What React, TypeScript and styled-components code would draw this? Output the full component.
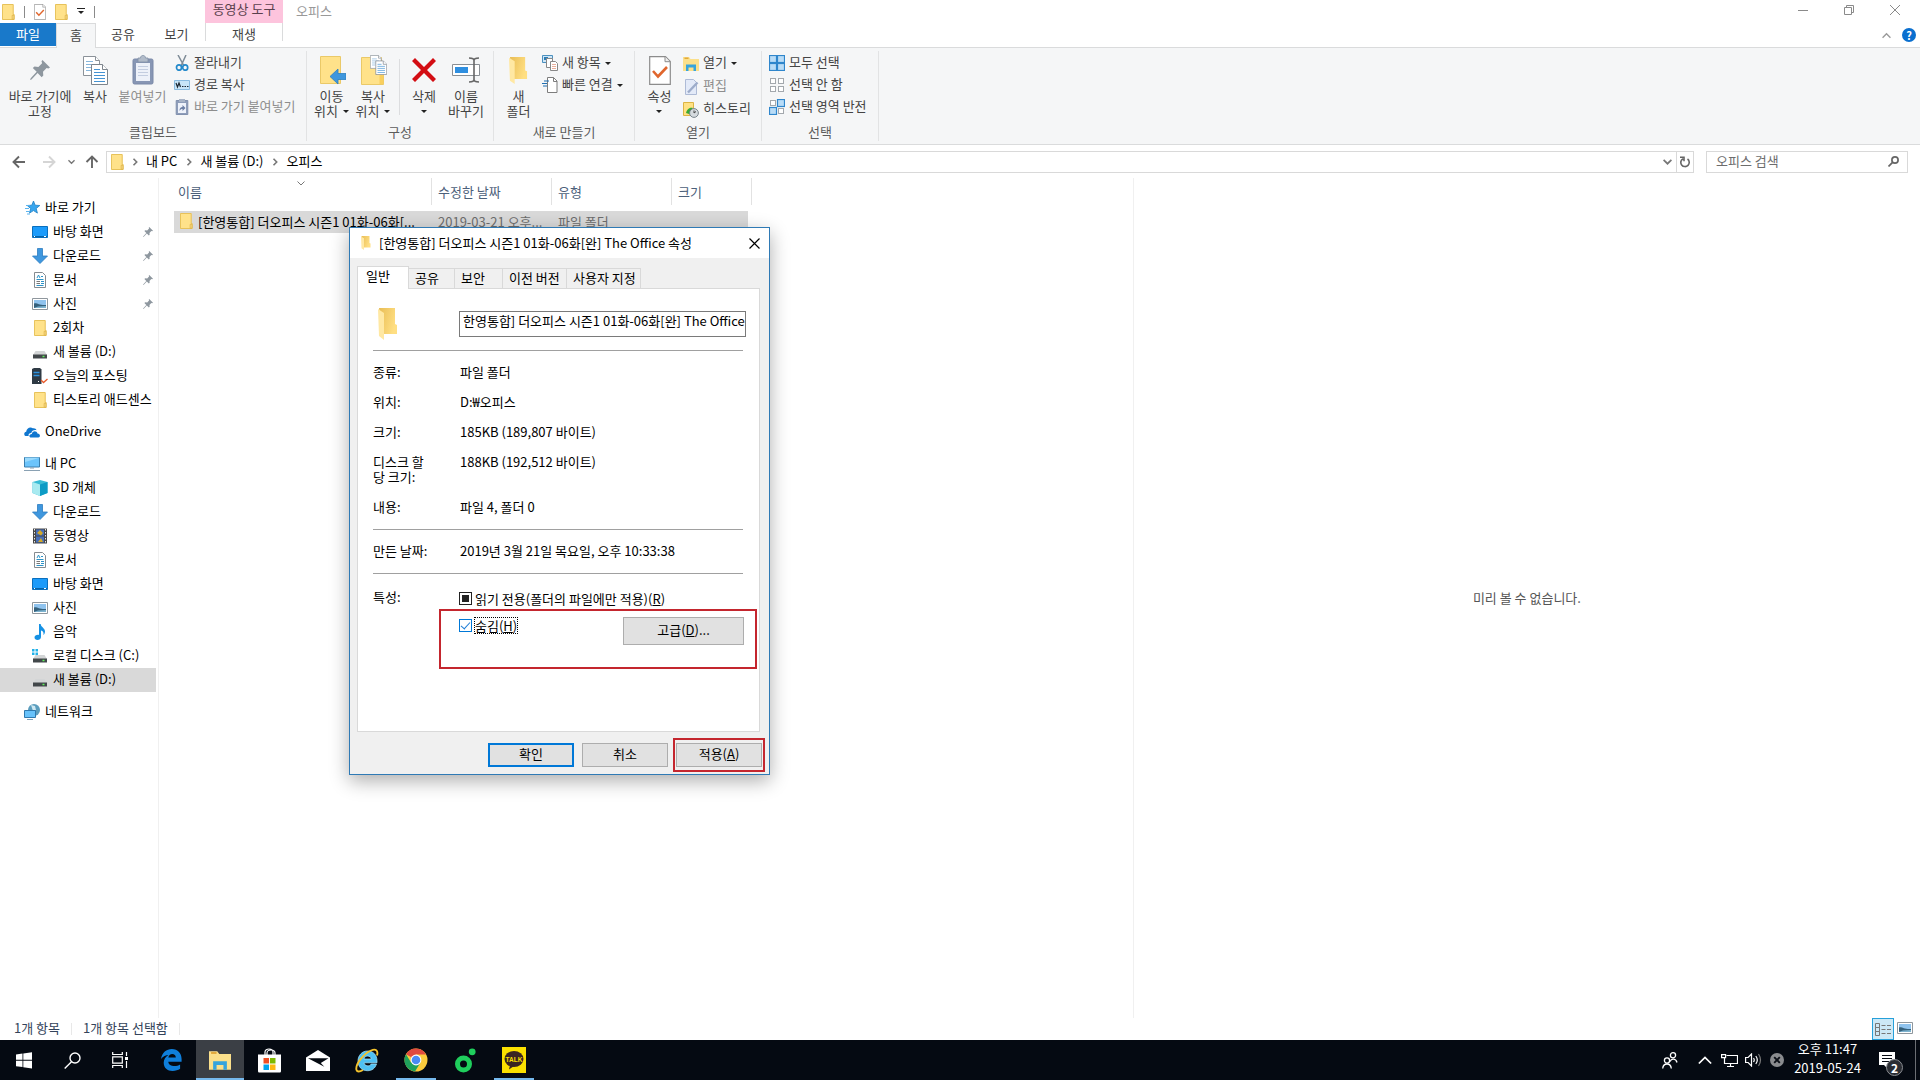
import React, { useEffect, useRef } from "react";
import styled, { createGlobalStyle, css } from "styled-components";

const GlobalStyle = createGlobalStyle`
  *, *::before, *::after { box-sizing: border-box; }
  body { margin: 0; background: #fff; }
  body, button, input { font-family: "Noto Sans CJK KR", "Noto Sans", sans-serif; font-size: 13px; line-height: 15px; }
  button { border: 0; padding: 0; background: none; color: inherit; }
  svg { display: block; flex: none; }
`;

/* ---------- icons ---------- */

const FolderIcon = ({ w = 13, h = 16 }: { w?: number; h?: number }) => (
  <svg width={w} height={h} viewBox="0 0 14 16" preserveAspectRatio="none">
    <path d="M.5.5h11.6v10h1v5H.5z" fill="#ffe28a" stroke="#e6bf55" />
    <path d="M11 15.300v-4h1.800v4z" fill="#ffe9a6" stroke="#dcae3c" strokeWidth=".8" />
  </svg>
);

const OpenFolderIcon = ({ w, h }: { w: number; h: number }) => (
  <svg width={w} height={h} viewBox="0 0 20 32" preserveAspectRatio="none">
    <defs>
      <linearGradient id="fld" x1="0" x2="1" y1="0" y2=".4">
        <stop offset="0" stopColor="#e9bd55" />
        <stop offset="1" stopColor="#ffdf83" />
      </linearGradient>
    </defs>
    <path d="M1 0h16v16l2 1v9H4z" fill="url(#fld)" />
    <path d="M0 1l6 4v27l-5-4z" fill="#ffe8a3" />
  </svg>
);

const CheckDocIcon = ({ w, h }: { w: number; h: number }) => (
  <svg width={w} height={h} viewBox="0 0 22 29">
    <path d="M.7.700h15.800l4.800 4.800v22.800H.7z" fill="#fff" stroke="#8c8c8c" strokeWidth="1.200" />
    <path d="M16 .7v5h5" fill="#eee" stroke="#8c8c8c" />
    <path d="M4 15l5 5.500 9-9.500" fill="none" stroke="#e0662d" strokeWidth="2.600" />
  </svg>
);

const PinIcon = ({ size }: { size: number }) => (
  <svg width={size} height={size} viewBox="0 0 20 20" fill="#8e979f">
    <path d="M12.500 0L20 7.500l-1.600 1.100-1.800-.5-3.600 3.700.3 3.700-1.600 1.700-4.100-4.200L1.500 19.500 0 20l.7-1.700 6-6.500L2.800 8l1.700-1.600 3.900.5 3.700-3.700-.6-1.900z" />
  </svg>
);

const CopyPages = ({ w, h }: { w: number; h: number }) => (
  <svg width={w} height={h} viewBox="0 0 25 29">
    <g fill="#fff" stroke="#8b9299">
      <path d="M.5.500h12l4 4v15H.5z" />
      <path d="M12.500.500v4h4" />
    </g>
    <path d="M3 5.500h7M3 8.500h10M3 11.500h6M3 14.500h5" stroke="#86b6dc" />
    <g fill="#fff" stroke="#7d858d">
      <path d="M8.500 8.500h11l5 5v15h-16z" />
      <path d="M19.500 8.500v5h5" />
    </g>
    <path d="M11 13.500h6M11 16.500h11M11 19.500h11M11 22.500h11M11 25.500h11" stroke="#4593d3" />
  </svg>
);

const ClipboardIcon = () => (
  <svg width="22" height="30" viewBox="0 0 22 30">
    <rect x="1" y="4" width="20" height="25" rx="1.500" fill="#8796b4" stroke="#7a89a8" />
    <path d="M4 8h14v18H4z" fill="#edf1f9" />
    <path d="M6 3h2.500C8.500-.5 13.500-.5 13.500 3H16v4H6z" fill="#b1bbc9" stroke="#8290a6" strokeWidth=".8" />
    <path d="M6 11.500h10M6 14.500h10M6 17.500h10M6 20.500h10" stroke="#c3cde0" />
  </svg>
);

const ScissorsIcon = () => (
  <svg width="16" height="16" viewBox="0 0 16 16" fill="none">
    <path d="M4 0l6 11M12 0L7 11" stroke="#7e8b97" strokeWidth="1.500" />
    <ellipse cx="5" cy="12.500" rx="2.500" ry="2.700" stroke="#2389cb" strokeWidth="1.700" />
    <ellipse cx="11.200" cy="12.500" rx="2.500" ry="2.700" stroke="#2389cb" strokeWidth="1.700" />
  </svg>
);

const PathIcon = () => (
  <svg width="16" height="16" viewBox="0 0 16 16">
    <path d="M.5 3.500h15v9H.5z" fill="#c8e5f8" stroke="#8abbe0" />
    <path d="M2 6l1.500 4L5 6l1.500 4" fill="none" stroke="#1c2733" strokeWidth="1.200" />
    <path d="M8 9.500h1.500M10.500 9.500H12M13 9.500h1.500" stroke="#1c2733" />
  </svg>
);

const PasteLinkIcon = () => (
  <svg width="16" height="16" viewBox="0 0 16 16">
    <path d="M2.200 1.500h11.600v14H2.200z" fill="#8e9dba" stroke="#8291ae" />
    <path d="M4 4h8v10H4z" fill="#eef2fa" />
    <path d="M5 0h6v3H5z" fill="#a7b3c6" />
    <path d="M5.500 12c0-3 1-4 3-4V6l3 3-3 3v-2c-1.500 0-2 .6-3 2z" fill="#6c7fa5" />
  </svg>
);

const MoveToIcon = () => (
  <svg width="28" height="30" viewBox="0 0 28 30">
    <path d="M2.500 1.500h20v27h-20z" fill="#ffe28a" stroke="#eac968" />
    <path d="M12 21.500l8-7.500v4.500h8v6h-8V29z" fill="#3f97dd" stroke="#2c7fc0" strokeWidth=".8" />
  </svg>
);

const CopyToIcon = () => (
  <svg width="28" height="30" viewBox="0 0 28 30">
    <path d="M2.500 2.500h20v16h2v11h-22z" fill="#ffe28a" stroke="#eac968" />
    <path d="M20.500 20h4v9h-4z" fill="#f9cf5e" />
    <svg x="11" y="0" width="17" height="20">
      <CopyPages w={17} h={20} />
    </svg>
  </svg>
);

const DeleteIcon = () => (
  <svg width="26" height="30" viewBox="0 0 26 30">
    <path d="M1 6l3-3 9 9 9-9 3 3-9 9 9 9-3 3-9-9-9 9-3-3 9-9z" fill="#d30d13" />
  </svg>
);

const RenameIcon = () => (
  <svg width="28" height="30" viewBox="0 0 28 30">
    <path d="M.5 9.500h27v11H.5z" fill="#fff" stroke="#8a8f94" />
    <path d="M3 12h13v6H3z" fill="#2f8fe0" />
    <path d="M17 3c3 0 5 .8 5 2.500v19c0 1.800-2 2.500-5 2.500M27 3c-3 0-5 .8-5 2.500v19c0 1.800 2 2.500 5 2.500" fill="none" stroke="#666" strokeWidth="1.600" />
  </svg>
);

const NewItemIcon = () => (
  <svg width="16" height="16" viewBox="0 0 16 16">
    <path d="M.5.500h10v7H.5z" fill="#cfe6f7" stroke="#4b90be" />
    <path d="M2 2h4v3H2z" fill="#2c7cb4" />
    <path d="M4.500 3.500h6v9h-6z" fill="#fff" stroke="#888" />
    <path d="M8.500 6.500h5l2 2v7h-7z" fill="#fff" stroke="#888" />
    <path d="M10 9.500h4M10 11.500h4M10 13.500h4" stroke="#e59a83" strokeWidth=".8" />
  </svg>
);

const EasyAccessIcon = () => (
  <svg width="16" height="16" viewBox="0 0 16 16">
    <path d="M5.500.500h6l3.500 3.500v11.500H5.500z" fill="#fff" stroke="#7d7d7d" />
    <path d="M11.500.500v4H15" fill="none" stroke="#7d7d7d" />
    <path d="M2 4h5M0 6.500h5M1 9h4" stroke="#1f6fb2" strokeWidth="1.200" />
  </svg>
);

const OpenIcon = ({ w = 16, h = 16 }: { w?: number; h?: number }) => (
  <svg width={w} height={h} viewBox="0 0 16 16" preserveAspectRatio="none">
    <path d="M0 1h6l1.500 2H16v12H0z" fill="#fbe08b" />
    <path d="M1.500 1.500h4v1.500h-4z" fill="#e2a93b" />
    <path d="M3 15V8.500h10V15h-2.500v-3.500h-5V15z" fill="#35a4dd" />
  </svg>
);

const EditIcon = () => (
  <svg width="16" height="16" viewBox="0 0 16 16">
    <path d="M2.500.500h8l3 3v12h-11z" fill="#e3eaf8" stroke="#aebbd6" />
    <path d="M14.500 3.500L5 13.500" stroke="#9dacca" strokeWidth="2.400" />
  </svg>
);

const HistoryIcon = () => (
  <svg width="16" height="16" viewBox="0 0 16 16">
    <path d="M.5.500h10v13H.5z" fill="#ffe184" stroke="#dcb444" />
    <path d="M3 11c1-5 5-6 7-5l-1 3 6 1-5 4-4-2z" fill="#3aa935" />
    <circle cx="11" cy="11" r="4.400" fill="#d5dade" stroke="#7a858c" />
    <path d="M11 8.500V11l2-1.500" fill="none" stroke="#444" />
  </svg>
);

const SelectIcon = ({ fill }: { fill: boolean[] }) => (
  <svg width="16" height="16" viewBox="0 0 16 16">
    {fill.map((on, i) => {
      const x = i % 2 ? 8.500 : 0.500;
      const y = i > 1 ? 8.500 : 0.500;
      return on ? (
        <rect key={i} x={x} y={y} width="7" height="7" fill="#b9dcf7" stroke="#2f86cc" strokeWidth="1.200" />
      ) : (
        <rect key={i} x={x + 1} y={y + 1} width="5" height="5" fill="#fff" stroke="#a3a8ad" />
      );
    })}
  </svg>
);

const Chevron = ({ dir, size = 8, color = "#777", weight = 1.600 }: { dir: "up" | "down" | "right"; size?: number; color?: string; weight?: number }) => (
  <svg width={size} height={size} viewBox="0 0 8 8" fill="none" stroke={color} strokeWidth={weight}>
    <path d={dir === "up" ? "M.5 6L4 2.500 7.500 6" : dir === "down" ? "M.5 2.500L4 6l3.500-3.500" : "M2.500.800L5.700 4 2.500 7.200"} />
  </svg>
);

const ArrowIcon = ({ turn, color }: { turn: number; color: string }) => (
  <svg width="14" height="14" viewBox="0 0 14 14" fill="none" stroke={color} strokeWidth="1.900">
    <path transform={`rotate(${turn} 7 7)`} d="M13 7H2M7 1.500L1.500 7 7 12.500" />
  </svg>
);

const StarIcon = () => (
  <svg width="16" height="16" viewBox="0 0 16 16">
    <path d="M9.500 1l1.600 4.200 4.700.3-3.600 3 1.200 4.600-3.900-2.500-4 2.500 1.200-4.600-3.500-3 4.600-.3z" fill="#38a6ee" stroke="#1d7fc4" strokeWidth=".8" />
    <path d="M2 5.500h4M1 8.500h4M2 11.500h4M3 14h3" stroke="#5cb4ee" />
  </svg>
);

const DesktopIcon = () => (
  <svg width="16" height="16" viewBox="0 0 16 16">
    <path d="M.5 2.500h15v11H.5z" fill="#1c9bfa" stroke="#0a6fbd" />
    <path d="M1 12.500h14" stroke="#0563a8" />
    <path d="M2 12.500h1M12 12.500h2" stroke="#fff" />
  </svg>
);

const DownloadIcon = () => (
  <svg width="16" height="16" viewBox="0 0 16 16">
    <path d="M5.500.500h5V8h5L8 15.500.500 8h5z" fill="#3f97de" stroke="#2c7cc0" strokeWidth=".8" />
  </svg>
);

const DocumentIcon = () => (
  <svg width="16" height="16" viewBox="0 0 16 16">
    <path d="M2.500.500h8l3 3v12h-11z" fill="#fff" stroke="#858b90" />
    <path d="M5 6l1.500-3L8 6M9 4.500h2M4.500 7.500h7M9 9.500h3M9 11.500h3M4.500 13.500h7" fill="none" stroke="#2b93c8" />
    <path d="M4.500 9.500h3.500M4.500 11.500h3.500" stroke="#777" />
  </svg>
);

const PictureIcon = () => (
  <svg width="16" height="16" viewBox="0 0 16 16">
    <path d="M.5 2.500h15v11H.5z" fill="#fff" stroke="#8f979d" />
    <path d="M2 4h12v8H2z" fill="#8fc3ee" />
    <path d="M2 7.500c3-1 5 2 12 1.500v3H2z" fill="#35617c" />
    <path d="M6 10.500l8-.5v2H2z" fill="#7db3cf" />
  </svg>
);

const DriveIcon = ({ windows = false }: { windows?: boolean }) => (
  <svg width="16" height="16" viewBox="0 0 16 16">
    <path d="M3.500 7h9l2.500 4H1z" fill="#d3d5d6" />
    <path d="M1 10.500h14v4H1z" fill="#42474a" />
    <path d="M10.500 12.500h2" stroke="#5ff05a" strokeWidth="1.500" />
    {windows && <path d="M0 1h2.500v2.500H0zM3.500 1H6v2.500H3.500zM0 4.500h2.500V7H0zM3.500 4.500H6V7H3.500z" fill="#22b1e8" />}
  </svg>
);

const ServerIcon = () => (
  <svg width="16" height="16" viewBox="0 0 16 16">
    <path d="M0 1l2-1h6l1.500 1.500V16H0z" fill="#2f3a44" />
    <path d="M1.500 4.500h6M1.500 7.500h6" stroke="#2d92e0" strokeWidth="1.300" />
    <path d="M6 13.500h1" stroke="#fff" />
    <path d="M9 12l2.500 2.500 4-3.500" fill="none" stroke="#e85a2a" strokeWidth="1.300" />
  </svg>
);

const CloudIcon = () => (
  <svg width="16" height="16" viewBox="0 0 16 16" fill="#0f76cf">
    <path d="M1.500 12C-.5 11 0 8 2.200 7.700 2.500 4.500 6 2.500 8.800 4.300c1.500-.5 3.300.2 3.800 1.900-3-.6-4.800 1-5.300 2.700C4.800 8.800 4 11 4.800 12z" />
    <path d="M7 13.500c-2.500-.3-2-3.600.8-3.600.6-3.300 5-3.400 5.700-.3 3 .2 3.200 3.600.8 3.900z" />
  </svg>
);

const ComputerIcon = () => (
  <svg width="16" height="16" viewBox="0 0 16 16">
    <path d="M.5 1.500h15v9.500H.5z" fill="#6cc4fb" stroke="#3b7fae" />
    <path d="M1 6l14-4v-.5H1z" fill="#9adafd" />
    <path d="M6 12h4M0 14.500h16" stroke="#8aa1b3" strokeWidth="1.200" />
  </svg>
);

const CubeIcon = () => (
  <svg width="16" height="16" viewBox="0 0 16 16">
    <path d="M8 0l7.500 2v11L8 16 .5 13V2z" fill="#39bcd5" />
    <path d="M.5 2L8 4.500V16L.5 13z" fill="#a8eaf0" />
    <path d="M8 4.500L15.500 2v11L8 16z" fill="#0c9bc5" />
  </svg>
);

const VideoIcon = () => (
  <svg width="16" height="16" viewBox="0 0 16 16">
    <path d="M1 .5h14v15H1z" fill="#474747" />
    <path d="M4 1.500h8v6H4zM4 8.500h8v6H4z" fill="#476fb9" />
    <path d="M5 5l3-3 3 3-2 2.500zM6 14l3-4 2 4z" fill="#d4a929" />
    <path d="M2.500 1v14M13.500 1v14" stroke="#e8e8e8" strokeDasharray="1.500 1.500" />
  </svg>
);

const MusicIcon = () => (
  <svg width="16" height="16" viewBox="0 0 16 16" fill="#1591e4">
    <path d="M7 0h1.700c0 3 4.300 4 4.300 7.500 0 1.500-.8 3-1.600 3.500.6-2.500-.4-4-2.400-4.500V13c0 1.800-1.700 3-3.500 3-1.700 0-3-1-3-2.400C2.500 11.500 5 10.500 7 11z" />
  </svg>
);

const NetworkIcon = () => (
  <svg width="16" height="16" viewBox="0 0 16 16">
    <circle cx="10" cy="6" r="6" fill="#5b9dbd" />
    <path d="M7 1l4 1 1 4-3 1z" fill="#cde8f2" />
    <path d="M.5 6.500h11v7H.5z" fill="#67c2fb" stroke="#2f79ae" />
    <path d="M3 15.500h6" stroke="#7ea3bd" />
  </svg>
);

/* ---------- window frame ---------- */

const Screen = styled.div`
  position: relative;
  display: flex;
  flex-direction: column;
  min-height: 100vh;
  background: #fff;
  color: #000;
`;

const TitleBar = styled.header`
  display: flex;
  height: 23px;
`;

const QuickAccess = styled.div`
  display: flex;
  align-items: center;
  gap: 9px;
  width: 205px;
  padding-left: 2px;
`;

const ThinBar = styled.span<{ $color?: string }>`
  width: 1px;
  height: 12px;
  background: ${(p) => p.$color ?? "#8a8a8a"};
`;

const Contextual = styled.div`
  width: 78px;
  padding-top: 1px;
  background: #fdc4dd;
  color: #5a3f4c;
  text-align: center;
`;

const WindowTitle = styled.h1`
  flex: 1;
  margin: 0;
  padding: 3px 0 0 13px;
  font-size: 13px;
  font-weight: 400;
  line-height: 15px;
  color: #999;
`;

const WindowButtons = styled.div`
  display: flex;
  padding-right: 2px;
`;

const WindowButton = styled.button`
  display: flex;
  justify-content: center;
  align-items: center;
  width: 46px;
  height: 20px;
`;

const TabRow = styled.nav`
  display: flex;
  height: 24px;
  color: #444;
`;

const RibbonTab = styled.button<{ $w: number; $kind?: "file" | "active" | "context" }>`
  width: ${(p) => p.$w}px;
  height: 23px;
  padding-bottom: 2px;
  ${(p) =>
    p.$kind === "file" &&
    css`
      background: #1979ca;
      color: #fff;
    `}
  ${(p) =>
    p.$kind === "active" &&
    css`
      z-index: 1;
      height: 25px;
      border: 1px solid #dadbdc;
      border-bottom: 0;
      background: #f5f6f7;
      padding-bottom: 4px;
    `}
  ${(p) =>
    p.$kind === "context" &&
    css`
      margin-left: 2px;
      height: 18px;
      border: solid #dadbdc;
      border-width: 0 1px;
      padding: 3px 0 0;
    `}
`;

const TabTools = styled.div`
  display: flex;
  flex: 1;
  justify-content: flex-end;
  align-items: center;
  gap: 11px;
  padding-right: 4px;
`;

const HelpButton = styled.button`
  width: 14px;
  height: 14px;
  border-radius: 7px;
  background: #0a6fcf;
  color: #fff;
  font-size: 11px;
  font-weight: 700;
  line-height: 14px;
`;

/* ---------- ribbon ---------- */

const Ribbon = styled.div`
  display: flex;
  height: 98px;
  padding: 3px 0;
  border: solid #dadbdc;
  border-width: 1px 0;
  background: #f5f6f7;
  color: #444;
`;

const Group = styled.section<{ $w: number }>`
  display: flex;
  flex-direction: column;
  justify-content: space-between;
  width: ${(p) => p.$w}px;
  border-right: 1px solid #e2e3e4;
`;

const GroupItems = styled.div`
  display: flex;
  padding-left: 4px;
`;

const GroupName = styled.div`
  height: 17px;
  color: #5c5c5c;
  text-align: center;
`;

const BigButton = styled.button<{ $w: number }>`
  display: flex;
  flex-direction: column;
  align-items: center;
  width: ${(p) => p.$w}px;
  height: 69px;
  color: ${(p) => (p.disabled ? "#8d8d8d" : "#444")};
`;

const BigIcon = styled.span`
  display: flex;
  align-items: center;
  justify-content: center;
  height: 37px;
  padding-top: 1px;
`;

const BigLabel = styled.span`
  text-align: center;
  white-space: pre;
`;

const Caret = styled.span<{ $gap?: boolean }>`
  display: inline-block;
  margin-left: ${(p) => (p.$gap ? 5 : 0)}px;
  border: 3px solid transparent;
  border-top-color: #222;
  border-bottom: 0;
  vertical-align: 3px;
`;

const SmallList = styled.div`
  display: flex;
  flex-direction: column;
  padding: 1px 0 0 3px;
`;

const SmallButton = styled.button<{ $tall?: boolean }>`
  display: flex;
  align-items: center;
  gap: 4px;
  height: ${(p) => (p.$tall ? 23 : 22)}px;
  color: ${(p) => (p.disabled ? "#8d8d8d" : "#444")};
  white-space: nowrap;
`;

const SmallLabel = styled.span`
  padding-bottom: 4px;
`;

const GroupDivider = styled.span`
  width: 1px;
  height: 56px;
  margin: 8px 4px 0 5px;
  background: #dcdddf;
`;

type BigProps = { w: number; icon: React.ReactNode; text: string; caret?: boolean; disabled?: boolean };
const Big = ({ w, icon, text, caret, disabled }: BigProps) => (
  <BigButton $w={w} disabled={disabled}>
    <BigIcon>{icon}</BigIcon>
    <BigLabel>
      {text}
      {caret && <Caret $gap={!text.endsWith("\n")} />}
    </BigLabel>
  </BigButton>
);

type SmallProps = { icon: React.ReactNode; text: string; caret?: boolean; disabled?: boolean; tall?: boolean };
const Small = ({ icon, text, caret, disabled, tall }: SmallProps) => (
  <SmallButton disabled={disabled} $tall={tall}>
    {icon}
    <SmallLabel>{text}</SmallLabel>
    {caret && <Caret />}
  </SmallButton>
);

/* ---------- address bar ---------- */

const AddressRow = styled.div`
  display: flex;
  align-items: center;
  height: 33px;
  padding-right: 12px;
`;

const NavButtons = styled.div`
  display: flex;
  align-items: center;
  gap: 12px;
  width: 106px;
  padding-left: 12px;
`;

const NavPair = styled.div<{ $gap: number }>`
  display: flex;
  align-items: center;
  gap: ${(p) => p.$gap}px;
`;

const AddressBox = styled.div`
  display: flex;
  flex: 1;
  align-items: center;
  height: 22px;
  border: 1px solid #d9d9d9;
  padding-left: 4px;
`;

const Crumbs = styled.div`
  display: flex;
  flex: 1;
  align-items: center;
  gap: 7px;
`;

const Crumb = styled.button`
  padding: 0 1px 2px 0;
  white-space: nowrap;
`;

const AddressButton = styled.button<{ $line?: boolean }>`
  display: flex;
  align-items: center;
  justify-content: center;
  width: 17px;
  height: 20px;
  border-left: ${(p) => (p.$line ? "1px solid #d9d9d9" : "0")};
`;

const SearchBox = styled.label`
  display: flex;
  align-items: center;
  width: 202px;
  height: 22px;
  margin-left: 12px;
  padding: 0 8px 0 9px;
  border: 1px solid #d9d9d9;
`;

const SearchInput = styled.input`
  flex: 1;
  min-width: 0;
  padding: 0 0 2px;
  border: 0;
  outline: 0;
  &::placeholder { color: #6d6d6d; }
`;

/* ---------- body ---------- */

const Body = styled.main`
  display: flex;
  flex: 1;
`;

const Sidebar = styled.nav`
  display: flex;
  flex-direction: column;
  gap: 8px;
  width: 159px;
  padding: 18px 2px 0 0;
  border-right: 1px solid #f0f0f0;
`;

const Tree = styled.ul`
  margin: 0;
  padding: 0;
  list-style: none;
`;

const TreeItem = styled.li<{ $deep?: boolean; $selected?: boolean }>`
  display: flex;
  align-items: center;
  gap: 5px;
  height: 24px;
  padding: 0 3px 0 ${(p) => (p.$deep ? 32 : 24)}px;
  background: ${(p) => (p.$selected ? "#d9d9d9" : "transparent")};
  white-space: nowrap;
`;

const TreeLabel = styled.a`
  flex: 1;
  padding-bottom: 3px;
  color: #000;
  text-decoration: none;
`;

const FilePane = styled.section`
  flex: 1;
  padding-left: 15px;
`;

const FileTable = styled.table`
  display: block;
  border-collapse: collapse;
`;

const HeadRow = styled.tr`
  display: grid;
  grid-template-columns: 258px 120px 120px 80px;
  height: 27px;
`;

const HeadCell = styled.th`
  position: relative;
  border-right: 1px solid #e2e2e2;
  padding: 6px 0 0 ${(p) => (p.id === "name" ? 4 : 6)}px;
  color: #4c607a;
  font-weight: 400;
  text-align: left;
`;

const SortMark = styled.span`
  position: absolute;
  top: 1px;
  left: 123px;
`;

const FileRow = styled.tr`
  display: grid;
  grid-template-columns: 258px 120px 196px;
  width: 574px;
  height: 22px;
  margin-top: 6px;
  background: #d9d9d9;
`;

const FileCell = styled.td<{ $main?: boolean }>`
  display: flex;
  align-items: center;
  gap: 5px;
  padding: 0 0 2px 6px;
  color: ${(p) => (p.$main ? "#000" : "#6d6d6d")};
  white-space: nowrap;
`;

const Preview = styled.aside`
  display: flex;
  align-items: center;
  justify-content: center;
  width: 41%;
  padding-bottom: 2px;
  border-left: 1px solid #f0f0f0;
  color: #555;
`;

const StatusBar = styled.footer`
  display: flex;
  align-items: center;
  gap: 11px;
  height: 22px;
  padding: 0 7px 0 14px;
  color: #33435a;
`;

const StatusText = styled.span`
  padding-bottom: 4px;
`;

const ViewButtons = styled.div`
  display: flex;
  flex: 1;
  justify-content: flex-end;
  align-items: center;
  gap: 3px;
`;

const ViewButton = styled.button<{ $on?: boolean }>`
  display: flex;
  align-items: center;
  justify-content: center;
  width: ${(p) => (p.$on ? 22 : 16)}px;
  height: 22px;
  padding-bottom: ${(p) => (p.$on ? 0 : 3)}px;
  border: ${(p) => (p.$on ? "1px solid #26a0da" : "0")};
  background: ${(p) => (p.$on ? "#cce8f6" : "none")};
`;

/* ---------- properties dialog ---------- */

const Dialog = styled.section`
  position: absolute;
  top: 227px;
  left: 349px;
  width: 421px;
  border: 1px solid #2f7ab5;
  background: #f0f0f0;
  box-shadow: 0 6px 18px rgba(0, 0, 0, 0.32);
`;

const DialogTitle = styled.header`
  display: flex;
  align-items: center;
  gap: 8px;
  height: 30px;
  padding: 0 9px 0 11px;
  background: #fff;
`;

const DialogName = styled.h2`
  flex: 1;
  margin: 0;
  padding-bottom: 2px;
  font-size: 13px;
  font-weight: 400;
  line-height: 15px;
`;

const DialogTabs = styled.div`
  display: flex;
  align-items: flex-end;
  padding: 8px 7px 0;
`;

const DialogTab = styled.button<{ $w: number; $active?: boolean }>`
  width: ${(p) => p.$w}px;
  height: 20px;
  padding: 0 0 2px 6px;
  border: 1px solid #d9d9d9;
  border-width: 1px 1px 0 0;
  text-align: left;
  white-space: nowrap;
  ${(p) =>
    p.$active &&
    css`
      z-index: 1;
      height: 23px;
      margin-bottom: -1px;
      padding: 0 0 5px 8px;
      border-width: 1px 1px 0;
      background: #fff;
    `}
`;

const Panel = styled.div`
  height: 444px;
  margin: 0 9px 0 7px;
  padding: 19px 13px 0 15px;
  border: 1px solid #d9d9d9;
  background: #fff;
`;

const NameRow = styled.div`
  display: flex;
  justify-content: space-between;
  align-items: flex-start;
  height: 42px;
  padding-left: 5px;
`;

const NameInput = styled.input`
  width: 287px;
  height: 26px;
  margin-top: 3px;
  padding: 0 0 7px 3px;
  border: 1px solid #7a7a7a;
  outline: 0;
`;

const Rule = styled.hr`
  height: 1px;
  margin: 0 3px 0 0;
  border: 0;
  background: #a0a0a0;
`;

const Facts = styled.dl`
  display: grid;
  grid-template-columns: 56px 1fr;
  gap: 15px 31px;
  margin: 0;
  padding: 13px 0 15px;
`;

const Term = styled.dt`
  white-space: pre;
`;

const Fact = styled.dd`
  margin: 0;
`;

const Attributes = styled.div`
  display: grid;
  grid-template-columns: 86px 1fr;
  padding-top: 15px;
`;

const Options = styled.div`
  display: flex;
  flex-direction: column;
  gap: 10px;
  padding-top: 1px;
`;

const OptionRow = styled.div`
  display: flex;
  align-items: flex-start;
  justify-content: space-between;
  padding-right: 2px;
`;

const Check = styled.label<{ $focus?: boolean }>`
  display: flex;
  align-items: center;
  gap: 2px;
  height: 17px;
  white-space: nowrap;
  span {
    border: 1px dotted ${(p) => (p.$focus ? "#000" : "transparent")};
  }
`;

const Box = styled.input`
  position: relative;
  width: 13px;
  height: 13px;
  margin: 0;
  border: 1px solid #222;
  background: #fff;
  appearance: none;
  &:indeterminate::after {
    content: "";
    position: absolute;
    inset: 2px;
    background: #222;
  }
  &:checked {
    border-color: #0078d7;
  }
  &:checked::after {
    content: "";
    position: absolute;
    top: 0;
    left: 3px;
    width: 5px;
    height: 9px;
    border: solid #1c7cd6;
    border-width: 0 1px 1px 0;
    transform: rotate(42deg);
  }
`;

const PushButton = styled.button<{ $w: number; $h: number; $default?: boolean }>`
  width: ${(p) => p.$w}px;
  height: ${(p) => p.$h}px;
  padding-bottom: 4px;
  border: ${(p) => (p.$default ? "2px solid #0078d7" : "1px solid #adadad")};
  background: #e1e1e1;
`;

const DialogButtons = styled.footer`
  display: flex;
  justify-content: flex-end;
  gap: 8px;
  padding: 11px 7px 7px;
`;

const Mark = styled.span<{ $x: number; $y: number; $w: number; $h: number }>`
  position: absolute;
  top: ${(p) => p.$y}px;
  left: ${(p) => p.$x}px;
  width: ${(p) => p.$w}px;
  height: ${(p) => p.$h}px;
  border: 2px solid #c4262e;
  pointer-events: none;
`;

/* ---------- taskbar ---------- */

const Taskbar = styled.footer`
  display: flex;
  justify-content: space-between;
  height: 40px;
  background: #050a12;
  color: #fff;
`;

const Apps = styled.div<{ $gap?: boolean }>`
  display: flex;
  gap: ${(p) => (p.$gap ? 1 : 0)}px;
  margin-right: 3px;
`;

const TaskButton = styled.button<{ $active?: boolean; $open?: boolean }>`
  display: flex;
  flex-direction: column;
  align-items: center;
  justify-content: center;
  position: relative;
  width: 48px;
  height: 40px;
  background: ${(p) => (p.$active ? "#3b3f45" : "none")};
  &::after {
    content: "";
    position: absolute;
    bottom: 0;
    left: ${(p) => (p.$active ? 0 : 4)}px;
    right: ${(p) => (p.$active ? 0 : 4)}px;
    height: 2px;
    background: ${(p) => (p.$active || p.$open ? "#76b9ed" : "none")};
  }
`;

const Tray = styled.div`
  display: flex;
  align-items: center;
`;

const TrayButton = styled.button<{ $w: number }>`
  display: flex;
  align-items: center;
  justify-content: center;
  width: ${(p) => p.$w}px;
  height: 40px;
`;

const Clock = styled.time`
  display: flex;
  flex-direction: column;
  align-items: center;
  gap: 4px;
  width: 77px;
  padding-bottom: 4px;
`;

const Notify = styled.button`
  position: relative;
  display: flex;
  align-items: center;
  width: 49px;
  height: 40px;
  padding-left: 13px;
`;

const Count = styled.span`
  position: absolute;
  top: 19px;
  left: 20px;
  width: 17px;
  height: 17px;
  border: 1px solid #8a8d92;
  border-radius: 9px;
  background: #2a2d33;
  font-size: 12px;
  font-weight: 700;
  line-height: 15px;
`;

const ShowDesktop = styled.button`
  width: 5px;
  height: 40px;
  border-left: 1px solid #6b6e73;
`;

/* Folder centred in the 16px slot that the tree icons share */
const TreeFolder = () => (
  <svg width="16" height="16">
    <svg x="2" width="14" height="16">
      <FolderIcon />
    </svg>
  </svg>
);

const QUICK: [React.ReactNode, string, boolean][] = [
  [<DesktopIcon />, "바탕 화면", true],
  [<DownloadIcon />, "다운로드", true],
  [<DocumentIcon />, "문서", true],
  [<PictureIcon />, "사진", true],
  [<TreeFolder />, "2회차", false],
  [<DriveIcon />, "새 볼륨 (D:)", false],
  [<ServerIcon />, "오늘의 포스팅", false],
  [<TreeFolder />, "티스토리 애드센스", false],
];

const PC: [React.ReactNode, string][] = [
  [<CubeIcon />, "3D 개체"],
  [<DownloadIcon />, "다운로드"],
  [<VideoIcon />, "동영상"],
  [<DocumentIcon />, "문서"],
  [<DesktopIcon />, "바탕 화면"],
  [<PictureIcon />, "사진"],
  [<MusicIcon />, "음악"],
  [<DriveIcon windows />, "로컬 디스크 (C:)"],
  [<DriveIcon />, "새 볼륨 (D:)"],
];

const ALL = [true, true, true, true];
const NONE = [false, false, false, false];
const SOME = [false, true, true, false];

const RibbonBar = () => (
  <Ribbon>
    <Group $w={307}>
      <GroupItems>
        <Big w={72} icon={<PinIcon size={20} />} text={"바로 가기에\n고정"} />
        <Big w={38} icon={<CopyPages w={25} h={29} />} text="복사" />
        <Big w={57} icon={<ClipboardIcon />} text="붙여넣기" disabled />
        <SmallList>
          <Small icon={<ScissorsIcon />} text="잘라내기" />
          <Small icon={<PathIcon />} text="경로 복사" />
          <Small icon={<PasteLinkIcon />} text="바로 가기 붙여넣기" disabled />
        </SmallList>
      </GroupItems>
      <GroupName>클립보드</GroupName>
    </Group>
    <Group $w={187}>
      <GroupItems>
        <Big w={41} icon={<MoveToIcon />} text={"이동\n위치"} caret />
        <Big w={42} icon={<CopyToIcon />} text={"복사\n위치"} caret />
        <GroupDivider />
        <Big w={40} icon={<DeleteIcon />} text={"삭제\n"} caret />
        <Big w={44} icon={<RenameIcon />} text={"이름\n바꾸기"} />
      </GroupItems>
      <GroupName>구성</GroupName>
    </Group>
    <Group $w={141}>
      <GroupItems>
        <Big w={41} icon={<OpenFolderIcon w={19} h={27} />} text={"새\n폴더"} />
        <SmallList>
          <Small icon={<NewItemIcon />} text="새 항목" caret />
          <Small icon={<EasyAccessIcon />} text="빠른 연결" caret />
        </SmallList>
      </GroupItems>
      <GroupName>새로 만들기</GroupName>
    </Group>
    <Group $w={127}>
      <GroupItems>
        <Big w={41} icon={<CheckDocIcon w={22} h={29} />} text={"속성\n"} caret />
        <SmallList>
          <Small icon={<OpenIcon />} text="열기" caret tall />
          <Small icon={<EditIcon />} text="편집" disabled tall />
          <Small icon={<HistoryIcon />} text="히스토리" tall />
        </SmallList>
      </GroupItems>
      <GroupName>열기</GroupName>
    </Group>
    <Group $w={117}>
      <GroupItems>
        <SmallList>
          <Small icon={<SelectIcon fill={ALL} />} text="모두 선택" />
          <Small icon={<SelectIcon fill={NONE} />} text="선택 안 함" />
          <Small icon={<SelectIcon fill={SOME} />} text="선택 영역 반전" />
        </SmallList>
      </GroupItems>
      <GroupName>선택</GroupName>
    </Group>
  </Ribbon>
);

const PropertiesDialog = () => {
  const readOnly = useRef<HTMLInputElement>(null);
  useEffect(() => {
    if (readOnly.current) readOnly.current.indeterminate = true;
  }, []);
  return (
    <Dialog role="dialog" aria-labelledby="props-title">
      <DialogTitle>
        <OpenFolderIcon w={10} h={14} />
        <DialogName id="props-title">[한영통합] 더오피스 시즌1 01화-06화[완] The Office 속성</DialogName>
        <button aria-label="닫기">
          <svg width="11" height="11" viewBox="0 0 11 11" stroke="#000" strokeWidth="1.200">
            <path d="M.5.500l10 10M10.500.500l-10 10" />
          </svg>
        </button>
      </DialogTitle>
      <DialogTabs>
        <DialogTab $w={52} $active>일반</DialogTab>
        <DialogTab $w={46}>공유</DialogTab>
        <DialogTab $w={48}>보안</DialogTab>
        <DialogTab $w={64}>이전 버전</DialogTab>
        <DialogTab $w={74}>사용자 지정</DialogTab>
      </DialogTabs>
      <Panel>
        <NameRow>
          <OpenFolderIcon w={20} h={32} />
          <NameInput aria-label="이름" defaultValue="한영통합] 더오피스 시즌1 01화-06화[완] The Office" />
        </NameRow>
        <Rule />
        <Facts>
          <Term>종류:</Term>
          <Fact>파일 폴더</Fact>
          <Term>위치:</Term>
          <Fact>D:₩오피스</Fact>
          <Term>크기:</Term>
          <Fact>185KB (189,807 바이트)</Fact>
          <Term>{"디스크 할\n당 크기:"}</Term>
          <Fact>188KB (192,512 바이트)</Fact>
          <Term>내용:</Term>
          <Fact>파일 4, 폴더 0</Fact>
        </Facts>
        <Rule />
        <Facts>
          <Term>만든 날짜:</Term>
          <Fact>2019년 3월 21일 목요일, 오후 10:33:38</Fact>
        </Facts>
        <Rule />
        <Attributes>
          <span>특성:</span>
          <Options>
            <OptionRow>
              <Check>
                <Box type="checkbox" ref={readOnly} />
                <span>읽기 전용(폴더의 파일에만 적용)(<u>R</u>)</span>
              </Check>
            </OptionRow>
            <OptionRow>
              <Check $focus>
                <Box type="checkbox" defaultChecked />
                <span>숨김(<u>H</u>)</span>
              </Check>
              <PushButton $w={121} $h={28}>고급(<u>D</u>)...</PushButton>
            </OptionRow>
          </Options>
        </Attributes>
      </Panel>
      <DialogButtons>
        <PushButton $w={86} $h={24} $default>확인</PushButton>
        <PushButton $w={86} $h={24}>취소</PushButton>
        <PushButton $w={86} $h={24}>적용(<u>A</u>)</PushButton>
      </DialogButtons>
      <Mark $x={89} $y={381} $w={318} $h={60} />
      <Mark $x={323} $y={510} $w={92} $h={34} />
    </Dialog>
  );
};

const TaskbarView = () => (
  <Taskbar>
    <Tray>
      <Apps>
        <TaskButton aria-label="시작">
          <svg width="16" height="17" viewBox="0 0 16 17" fill="#fff">
            <path d="M0 2.500l6.500-.9v6.200H0zM7.300 1.500L16 .2v7.600H7.300zM0 8.700h6.500v6.400L0 14.200zM7.300 8.700H16v7.800l-8.700-1.200z" />
          </svg>
        </TaskButton>
        <TaskButton aria-label="검색">
          <svg width="17" height="17" viewBox="0 0 17 17" fill="none" stroke="#fff" strokeWidth="1.400">
            <circle cx="11" cy="6" r="5" />
            <path d="M7.500 9.700L.7 16.500" />
          </svg>
        </TaskButton>
        <TaskButton aria-label="작업 보기">
          <svg width="16" height="16" viewBox="0 0 16 16" fill="none" stroke="#fff" strokeWidth="1.200">
            <path d="M.7 0v2.500h9.600V0M.7 16v-2.500h9.600V16M.7 4.800h9.600v6.400H.7zM14.500 0v4M14.500 9v7" />
            <path d="M13 5h3v3h-3z" fill="#fff" stroke="none" />
          </svg>
        </TaskButton>
      </Apps>
      <Apps $gap>
        <TaskButton aria-label="Edge">
          <svg width="21" height="22" viewBox="0 0 21 22">
            <path d="M0 10C1 3.500 5.500 0 10.800 0 17 0 20.600 4.500 20.600 10v2.700H7.300c.2 3 3 4.300 6 4.300 2.300 0 4.200-.6 5.800-1.600v4.400c-2 1.300-4.500 2.200-7.600 2.200-5 0-8.800-3-8.800-8.200 0-3.500 1.800-6.200 4.800-7.900C5 6.200 2 7.200 0 10zm7.300-1.500h7.500c0-2.400-1.400-3.600-3.500-3.600-2.200 0-3.600 1.500-4 3.600z" fill="#0f7fdb" />
          </svg>
        </TaskButton>
        <TaskButton $active aria-label="파일 탐색기">
          <OpenIcon w={22} h={21} />
        </TaskButton>
        <TaskButton aria-label="Store">
          <svg width="23" height="25" viewBox="0 0 23 25">
            <path d="M7 7V4c0-4 8-4 8 0v3M9 7V5c0-4 8-4 8 0v2" fill="none" stroke="#fff" strokeWidth="1.200" />
            <path d="M0 6.500h23V23c0 1-.6 1.500-1.500 1.500h-20C.6 24.500 0 24 0 23z" fill="#fff" />
            <path d="M5.500 10h5.500v5.500H5.500z" fill="#f04e23" />
            <path d="M12 10h5.500v5.500H12z" fill="#7eb900" />
            <path d="M5.500 16.500h5.500V22H5.500z" fill="#00a3ee" />
            <path d="M12 16.500h5.500V22H12z" fill="#fdb813" />
          </svg>
        </TaskButton>
        <TaskButton aria-label="메일">
          <svg width="24" height="21" viewBox="0 0 24 21">
            <path d="M0 7.500L12 0l12 7.500V21H0z" fill="#fff" />
            <path d="M2 8.200h20.500L14.800 13l3.500 3.700z" fill="#050a12" />
          </svg>
        </TaskButton>
        <TaskButton aria-label="Internet Explorer">
          <svg width="24" height="25" viewBox="0 0 24 25">
            <path d="M12.500 3C18.500 3 22 7.200 22 13v1.800H9c.3 3.600 6 4 7.200 1.200h5.300C20 20.500 17 22.700 12.500 22.700 6.500 22.700 3 18.500 3 13S7 3 12.500 3zM9 11h7.300C16 7.200 9.500 7 9 11z" fill="#4fc1f3" stroke="#a9e6ff" strokeWidth=".7" />
            <path d="M22 7.500C23.500 2 20.500.500 16 2.500 8 6 0 17 1.500 22c.6 2 3 2 6.500 0" fill="none" stroke="#f5c32c" strokeWidth="1.900" />
          </svg>
        </TaskButton>
        <TaskButton $open aria-label="Chrome">
          <svg width="24" height="24" viewBox="0 0 24 24">
            <circle cx="12" cy="12" r="11.500" fill="#fbcb3c" />
            <path d="M12 12L2 6.200A11.500 11.500 0 0 1 22 6.500H12z" fill="#e04a3f" />
            <path d="M2 6.200A11.500 11.500 0 0 0 11 23.500l5.500-9L12 12 7 14.500z" fill="#1fa15c" />
            <circle cx="12" cy="12" r="5.400" fill="#fff" />
            <circle cx="12" cy="12" r="4.300" fill="#4a8bf5" />
          </svg>
        </TaskButton>
        <TaskButton aria-label="Green">
          <svg width="21" height="25" viewBox="0 0 21 25">
            <circle cx="8.500" cy="16" r="6" fill="none" stroke="#1fce5c" strokeWidth="5" />
            <circle cx="17.200" cy="3.800" r="3.400" fill="#1fce5c" />
          </svg>
        </TaskButton>
        <TaskButton $open aria-label="Talk">
          <svg width="24" height="26" viewBox="0 0 24 26">
            <path d="M0 0h24v26H0z" fill="#fbe000" />
            <ellipse cx="12" cy="12" rx="9.500" ry="8" fill="#3a2422" />
            <path d="M8 18l-1 4.500 5-3.500z" fill="#3a2422" />
            <text x="12" y="14.500" fontSize="6.500" fontWeight="700" fill="#fbe000" textAnchor="middle" fontFamily="Liberation Sans, sans-serif">TALK</text>
          </svg>
        </TaskButton>
      </Apps>
    </Tray>
    <Tray>
      <TrayButton $w={47} aria-label="피플">
        <svg width="16" height="17" viewBox="0 0 16 17" fill="none" stroke="#fff" strokeWidth="1.300">
          <circle cx="11" cy="3.300" r="2.600" />
          <path d="M8 9.500c1.500-3.500 6-3 7 1" />
          <circle cx="5" cy="8.500" r="2.600" />
          <path d="M.7 16.500c.6-6 8-6 8.600 0" />
        </svg>
      </TrayButton>
      <TrayButton $w={24} aria-label="숨겨진 아이콘">
        <Chevron dir="up" size={14} color="#fff" weight={1} />
      </TrayButton>
      <TrayButton $w={24} aria-label="네트워크">
        <svg width="17" height="15" viewBox="0 0 17 15" fill="none" stroke="#fff" strokeWidth="1.200">
          <path d="M5.500 2.500h11v8H3.500V5M6 13.500h7M9.500 10.500v3" />
          <path d="M.6 1.600h4v3h-4z" />
        </svg>
      </TrayButton>
      <TrayButton $w={24} aria-label="볼륨">
        <svg width="17" height="14" viewBox="0 0 17 14" fill="none" stroke="#fff" strokeWidth="1.200">
          <path d="M.6 4.500h2.500L6.500 1v12L3.100 9.500H.6zM8.500 5q1.500 2 0 4M10.800 3q3 4 0 8" />
          <path d="M13.500 1q4 6 0 12" stroke="#777" />
        </svg>
      </TrayButton>
      <TrayButton $w={24} aria-label="상태">
        <svg width="14" height="14" viewBox="0 0 14 14">
          <circle cx="7" cy="7" r="7" fill="#8a8c8f" />
          <path d="M4.200 4.200l5.600 5.600M9.800 4.200L4.200 9.800" stroke="#0b0f16" strokeWidth="1.900" />
        </svg>
      </TrayButton>
      <Clock>
        <span>오후 11:47</span>
        <span>2019-05-24</span>
      </Clock>
      <Notify aria-label="알림">
        <svg width="16" height="16" viewBox="0 0 16 16">
          <path d="M0 0h16v13h-5l-3 3-3-3H0z" fill="#fff" />
          <path d="M3 3.500h10M3 6.500h10M3 9.500h7" stroke="#050a12" />
        </svg>
        <Count>2</Count>
      </Notify>
      <ShowDesktop aria-label="바탕 화면 보기" />
    </Tray>
  </Taskbar>
);

export default function App() {
  return (
    <Screen>
      <GlobalStyle />
      <TitleBar>
        <QuickAccess>
          <FolderIcon />
          <ThinBar />
          <CheckDocIcon w={12} h={16} />
          <FolderIcon />
          <svg width="8" height="7" viewBox="0 0 8 7">
            <path d="M0 .5h8" stroke="#222" />
            <path d="M1 3h6L4 6z" fill="#222" />
          </svg>
          <ThinBar />
        </QuickAccess>
        <Contextual>동영상 도구</Contextual>
        <WindowTitle>오피스</WindowTitle>
        <WindowButtons>
          <WindowButton aria-label="최소화">
            <svg width="10" height="10" stroke="#8a8a8a"><path d="M0 5.500h10" /></svg>
          </WindowButton>
          <WindowButton aria-label="복원">
            <svg width="10" height="10" fill="none" stroke="#8a8a8a"><path d="M.5 2.500h7v7h-7zM2.500 2.500v-2h7v7h-2" /></svg>
          </WindowButton>
          <WindowButton aria-label="닫기">
            <svg width="10" height="10" stroke="#8a8a8a"><path d="M0 0l10 10M10 0L0 10" /></svg>
          </WindowButton>
        </WindowButtons>
      </TitleBar>
      <TabRow>
        <RibbonTab $w={56} $kind="file">파일</RibbonTab>
        <RibbonTab $w={40} $kind="active">홈</RibbonTab>
        <RibbonTab $w={54}>공유</RibbonTab>
        <RibbonTab $w={53}>보기</RibbonTab>
        <RibbonTab $w={78} $kind="context">재생</RibbonTab>
        <TabTools>
          <button aria-label="리본 최소화"><Chevron dir="up" size={9} color="#999" weight={1.200} /></button>
          <HelpButton aria-label="도움말">?</HelpButton>
        </TabTools>
      </TabRow>
      <RibbonBar />
      <AddressRow>
        <NavButtons>
          <NavPair $gap={16}>
            <button aria-label="뒤로"><ArrowIcon turn={0} color="#666" /></button>
            <button aria-label="앞으로"><ArrowIcon turn={180} color="#d5d5d5" /></button>
          </NavPair>
          <NavPair $gap={10}>
            <button aria-label="최근 위치"><Chevron dir="down" size={7} /></button>
            <button aria-label="위로"><ArrowIcon turn={90} color="#666" /></button>
          </NavPair>
        </NavButtons>
        <AddressBox>
          <Crumbs>
            <FolderIcon />
            <Chevron dir="right" />
            <Crumb>내 PC</Crumb>
            <Chevron dir="right" />
            <Crumb>새 볼륨 (D:)</Crumb>
            <Chevron dir="right" />
            <Crumb>오피스</Crumb>
          </Crumbs>
          <AddressButton aria-label="이전 위치"><Chevron dir="down" size={9} /></AddressButton>
          <AddressButton $line aria-label="새로 고침">
            <svg width="10" height="12" viewBox="0 0 10 12" fill="none" stroke="#666" strokeWidth="1.600">
              <path d="M3 2.700A4.200 4.200 0 1 0 7.500 3M0 1.200h4v4" />
            </svg>
          </AddressButton>
        </AddressBox>
        <SearchBox>
          <SearchInput placeholder="오피스 검색" aria-label="오피스 검색" />
          <svg width="11" height="11" viewBox="0 0 11 11" fill="none" stroke="#666" strokeWidth="1.700">
            <circle cx="7" cy="4" r="3.100" />
            <path d="M4.800 6.200L.5 10.500" />
          </svg>
        </SearchBox>
      </AddressRow>
      <Body>
        <Sidebar>
          <Tree>
            <TreeItem><StarIcon /><TreeLabel href="#quick">바로 가기</TreeLabel></TreeItem>
            {QUICK.map(([icon, text, pinned]) => (
              <TreeItem key={text} $deep>
                {icon}
                <TreeLabel href="#item">{text}</TreeLabel>
                {pinned && <PinIcon size={10} />}
              </TreeItem>
            ))}
          </Tree>
          <Tree>
            <TreeItem><CloudIcon /><TreeLabel href="#onedrive">OneDrive</TreeLabel></TreeItem>
          </Tree>
          <Tree>
            <TreeItem><ComputerIcon /><TreeLabel href="#pc">내 PC</TreeLabel></TreeItem>
            {PC.map(([icon, text]) => (
              <TreeItem key={text} $deep $selected={text === "새 볼륨 (D:)"}>
                {icon}
                <TreeLabel href="#item">{text}</TreeLabel>
              </TreeItem>
            ))}
          </Tree>
          <Tree>
            <TreeItem><NetworkIcon /><TreeLabel href="#network">네트워크</TreeLabel></TreeItem>
          </Tree>
        </Sidebar>
        <FilePane>
          <FileTable>
            <thead>
              <HeadRow>
                <HeadCell id="name">
                  이름
                  <SortMark><Chevron dir="down" size={8} weight={1} /></SortMark>
                </HeadCell>
                <HeadCell>수정한 날짜</HeadCell>
                <HeadCell>유형</HeadCell>
                <HeadCell>크기</HeadCell>
              </HeadRow>
            </thead>
            <tbody>
              <FileRow>
                <FileCell $main><FolderIcon />[한영통합] 더오피스 시즌1 01화-06화[...</FileCell>
                <FileCell>2019-03-21 오후...</FileCell>
                <FileCell>파일 폴더</FileCell>
              </FileRow>
            </tbody>
          </FileTable>
        </FilePane>
        <Preview>미리 볼 수 없습니다.</Preview>
      </Body>
      <StatusBar>
        <StatusText>1개 항목</StatusText>
        <ThinBar $color="#e8e8e8" />
        <StatusText>1개 항목 선택함</StatusText>
        <ThinBar $color="#e8e8e8" />
        <ViewButtons>
          <ViewButton $on aria-label="자세히">
            <svg width="16" height="13" viewBox="0 0 16 13" fill="none" stroke="#777">
              <path d="M.5.500h4v4h-4zM.5 4.500h4v4h-4zM.5 8.500h4v4h-4zM6.500 2.500h4M12 2.500h4M6.500 6.500h4M12 6.500h4M6.500 10.500h4M12 10.500h4" />
            </svg>
          </ViewButton>
          <ViewButton aria-label="큰 아이콘"><PictureIcon /></ViewButton>
        </ViewButtons>
      </StatusBar>
      <TaskbarView />
      <PropertiesDialog />
    </Screen>
  );
}
